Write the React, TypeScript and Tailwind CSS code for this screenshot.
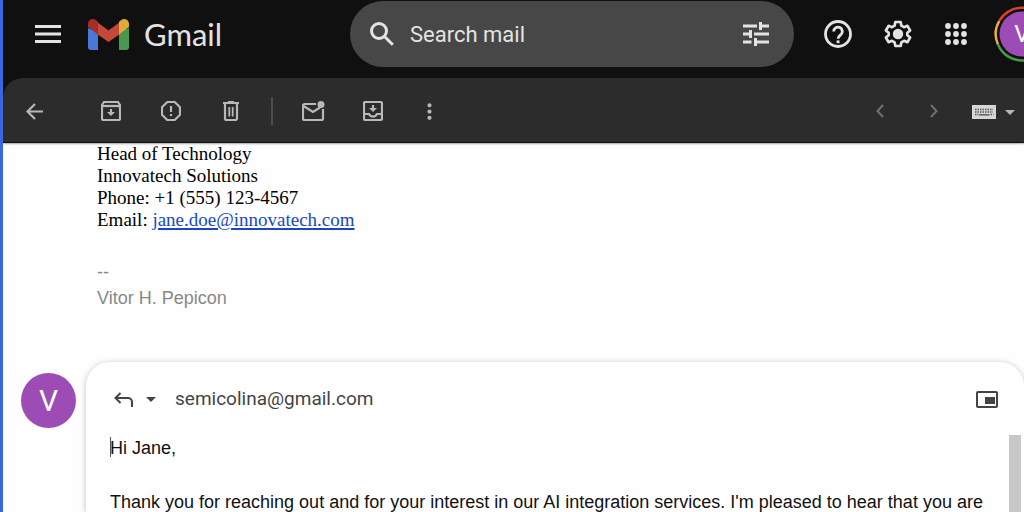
import React from 'react';
import { MdMoreVert } from 'react-icons/md';
import { clsx } from 'clsx';

interface IconButtonProps {
  label: string;
  className?: string;
  children: React.ReactNode;
}

const IconButton: React.FC<IconButtonProps> = ({ label, className, children }) => (
  <button
    type="button"
    aria-label={label}
    className={clsx('flex h-8 w-8 shrink-0 items-center justify-center', className)}
  >
    {children}
  </button>
);

const GmailLogo = () => (
  <svg width="41" height="31" viewBox="0 0 41 31" className="shrink-0">
    <path d="M0 9v19a3 3 0 0 0 3 3h7V13z" fill="#4a78d6" />
    <path d="M31 13v18h7a3 3 0 0 0 3-3V9z" fill="#4a9850" />
    <path d="M9 3 20.500 11.500 32 3V15L20.500 23 9 15z" fill="#c5493a" />
    <path d="M0 5C0 .5 4.500-1.500 8 1.200L10 2.700V15.500L0 8z" fill="#a52f27" />
    <path d="M41 5c0-4.500-4.500-6.500-8-3.800L31 2.700V15.500L41 8z" fill="#ddab3a" />
  </svg>
);

const MenuIcon = () => (
  <svg width="26" height="18" viewBox="0 0 26 18" stroke="currentColor" strokeWidth="3" className="shrink-0">
    <path d="M0 1.500h26M0 9h26M0 16.500h26" />
  </svg>
);

const SearchIcon = () => (
  <svg width="24" height="24" viewBox="0 0 24 24" fill="none" stroke="currentColor" strokeWidth="3" className="shrink-0">
    <circle cx="9" cy="9" r="7.500" />
    <path d="m14.500 14.500 8.300 8.300" />
  </svg>
);

const TuneIcon = () => (
  <svg width="26" height="26" viewBox="0 0 26 26" fill="none" stroke="currentColor" strokeWidth="3" className="shrink-0">
    <path d="M0 5h14M18 5h8M17.500 1v8" />
    <path d="M0 13h8M11 13h15M7.500 9v8" />
    <path d="M0 21h8.500M13 21h13M12.500 17v8" />
  </svg>
);

const HelpIcon = () => (
  <svg width="28" height="28" viewBox="0 0 28 28" fill="none" stroke="currentColor" strokeWidth="2.800">
    <circle cx="14" cy="14" r="12.500" />
    <path d="M9.700 11.500a4.300 4.300 0 1 1 7.400 2.900c-1.500 1.500-3 2-3 4.300" />
    <path d="M12.600 21.800h2.900" />
  </svg>
);

const SettingsIcon = () => (
  <svg width="34" height="34" viewBox="0 0 24 24" fill="none" stroke="currentColor" strokeWidth="2" strokeLinejoin="round">
    <path d="M10 3h4l.5 2.700 2 1.200 2.600-1 2 3.500-2.100 1.700v1.800l2.100 1.700-2 3.500-2.600-1-2 1.200L14 21h-4l-.5-2.700-2-1.200-2.600 1-2-3.500L5 12.900v-1.800L2.900 9.400l2-3.500 2.600 1 2-1.200z" />
    <circle cx="12" cy="12" r="3.900" fill="currentColor" stroke="none" />
  </svg>
);

const AppsIcon = () => (
  <svg width="24" height="24" viewBox="0 0 24 24" fill="currentColor">
    {[4, 12, 20].map((y) =>
      [4, 12, 20].map((x) => <circle key={`${x}-${y}`} cx={x} cy={y} r="2.900" />)
    )}
  </svg>
);

const BackIcon = () => (
  <svg width="17" height="17" viewBox="0 0 17 17" fill="none" stroke="currentColor" strokeWidth="2.200">
    <path d="M9 1 1.500 8.500 9 16M1.500 8.500H17" />
  </svg>
);

const ArchiveIcon = () => (
  <svg width="20" height="20" viewBox="0 0 20 20" fill="none" stroke="currentColor" strokeWidth="2.200">
    <path d="M1 5v12.500A1.500 1.500 0 0 0 2.500 19h15a1.500 1.500 0 0 0 1.500-1.500V4l-2-3H3L1 4z" strokeLinejoin="round" />
    <path d="M1 5h18" />
    <path d="M10 8v5" />
    <path d="M6 11h8l-4 4z" fill="currentColor" stroke="none" />
  </svg>
);

const SpamIcon = () => (
  <svg width="20" height="20" viewBox="0 0 20 20" fill="none" stroke="currentColor" strokeWidth="2.200">
    <path d="M6.300 1h7.400L19 6.300v7.400L13.700 19H6.300L1 13.700V6.300z" strokeLinejoin="round" />
    <path d="M10 5v6M10 13v2" />
  </svg>
);

const TrashIcon = () => (
  <svg width="16" height="20" viewBox="0 0 16 20" fill="none" stroke="currentColor" strokeWidth="2.200">
    <path d="M0 2h16M5 1h6" />
    <path d="M2 2v15.500A1.500 1.500 0 0 0 3.500 19h9a1.500 1.500 0 0 0 1.500-1.500V2" />
    <path d="M6.300 6v9.500M9.700 6v9.500" strokeWidth="1.800" />
  </svg>
);

const UnreadIcon = () => (
  <svg width="23" height="20" viewBox="0 0 23 20" fill="none" stroke="currentColor" strokeWidth="2.200">
    <path d="M14 3H2.500A1.500 1.500 0 0 0 1 4.500v13A1.500 1.500 0 0 0 2.500 19h17a1.500 1.500 0 0 0 1.500-1.500V8" />
    <path d="m1.500 5 9.500 6 7-4.500" />
    <circle cx="19" cy="3.500" r="3.500" fill="currentColor" stroke="none" />
  </svg>
);

const MoveToIcon = () => (
  <svg width="20" height="20" viewBox="0 0 20 20" fill="none" stroke="currentColor" strokeWidth="2.200">
    <rect x="1" y="1" width="18" height="18" rx="1.500" />
    <path d="M1 13h5c1 1.800 2.300 2.600 4 2.600s3-.8 4-2.600h5" />
    <path d="M10 4v4" />
    <path d="M6 7h8l-4 4z" fill="currentColor" stroke="none" />
  </svg>
);

const NewerIcon = () => (
  <svg width="8" height="14" viewBox="0 0 8 14" fill="none" stroke="currentColor" strokeWidth="2">
    <path d="M7 1 1.500 7 7 13" />
  </svg>
);

const OlderIcon = () => (
  <svg width="8" height="14" viewBox="0 0 8 14" fill="none" stroke="currentColor" strokeWidth="2">
    <path d="m1 1 5.500 6L1 13" />
  </svg>
);

const KeyboardIcon = () => (
  <svg width="24" height="14" viewBox="0 0 24 14">
    <rect width="24" height="14" fill="#d6d6d6" />
    <g stroke="#555" strokeWidth="1.400">
      <path d="M3 4.500h18M3 7h18M3 9.500h3M18.500 9.500h3" strokeDasharray="1.500 1" />
      <path d="M6.500 9.800h11" />
    </g>
  </svg>
);

const Caret = () => (
  <svg width="10" height="5" viewBox="0 0 10 5" fill="currentColor" className="shrink-0">
    <path d="M0 0h10L5 5z" />
  </svg>
);

const ReplyIcon = () => (
  <svg width="20" height="16" viewBox="0 0 20 16" fill="none" stroke="currentColor" strokeWidth="2">
    <path d="M6.500 1 1.500 6l5 5" />
    <path d="M1.500 6H14a4 4 0 0 1 4 4v5" />
  </svg>
);

const PopOutIcon = () => (
  <svg width="22" height="17" viewBox="0 0 22 17">
    <rect x="1" y="1" width="20" height="15" rx="1" fill="none" stroke="currentColor" strokeWidth="2" />
    <path d="M9 6h10v7H9z" fill="currentColor" />
  </svg>
);

// Profile picture with the four-colour account ring
const AccountAvatar = () => (
  <svg width="56" height="56" viewBox="0 0 56 56">
    <g fill="none" strokeWidth="2.500">
      <path d="M5.200 15A26 26 0 0 1 50.500 15" stroke="#d8402f" />
      <path d="M4 38.500A26 26 0 0 1 5.200 15" stroke="#e8b035" />
      <path d="M52 38.500A26 26 0 0 1 4 38.500" stroke="#459a4c" />
      <path d="M50.500 15A26 26 0 0 1 52 38.500" stroke="#4a78d6" />
    </g>
    <circle cx="28" cy="28" r="22.500" fill="#9d4cb5" />
    <text x="28" y="36" textAnchor="middle" fill="#fff" fontSize="24" fontFamily="Roboto, sans-serif">V</text>
  </svg>
);

const Header = () => (
  <header className="flex h-[78px] shrink-0 items-start bg-[#101010] text-[#e3e3e3]">
    <div className="flex h-[68px] w-[347px] shrink-0 items-center pl-7">
      <IconButton label="Main menu" className="w-[34px]">
        <MenuIcon />
      </IconButton>
      <a href="#inbox" className="ml-[23px] flex items-center gap-[15px]">
        <GmailLogo />
        <span className="font-[Lato,sans-serif] text-[31px] leading-10">Gmail</span>
      </a>
    </div>
    <form role="search" className="mt-px flex h-[66px] min-w-0 flex-1 items-center rounded-full bg-[#474747] pr-[22px] pl-4">
      <IconButton label="Search">
        <SearchIcon />
      </IconButton>
      <input
        type="text"
        aria-label="Search mail"
        placeholder="Search mail"
        className="ml-3 min-w-0 flex-1 bg-transparent font-[Roboto,sans-serif] text-[22px] outline-none placeholder:text-[#e3e3e3]"
      />
      <IconButton label="Show search options">
        <TuneIcon />
      </IconButton>
    </form>
    <div className="-mr-[26px] flex h-[68px] shrink-0 items-center pl-7">
      <IconButton label="Support">
        <HelpIcon />
      </IconButton>
      <IconButton label="Settings" className="ml-7">
        <SettingsIcon />
      </IconButton>
      <IconButton label="Google apps" className="ml-[26px]">
        <AppsIcon />
      </IconButton>
      <button type="button" aria-label="Google Account" className="ml-[22px] shrink-0">
        <AccountAvatar />
      </button>
    </div>
  </header>
);

const Toolbar = () => (
  <div className="relative flex h-[65px] shrink-0 items-center rounded-tl-[20px] border-b border-[#111] bg-[#2c2c2c] pt-0.5 pr-[9px] pl-[15px] text-[#b8b8b8] shadow-[0_1px_2px_rgba(0,0,0,0.35)]">
    <IconButton label="Back to Inbox">
      <BackIcon />
    </IconButton>
    <div className="ml-[45px] flex items-center gap-7">
      <IconButton label="Archive"><ArchiveIcon /></IconButton>
      <IconButton label="Report spam"><SpamIcon /></IconButton>
      <IconButton label="Delete"><TrashIcon /></IconButton>
    </div>
    <div className="mx-6 h-7 w-0.5 bg-[#4c4c4c]" />
    <div className="flex items-center gap-7">
      <IconButton label="Mark as unread"><UnreadIcon /></IconButton>
      <IconButton label="Move to"><MoveToIcon /></IconButton>
    </div>
    <IconButton label="More" className="ml-6">
      <MdMoreVert size={25} className="shrink-0" />
    </IconButton>
    <div className="ml-auto flex items-center">
      <IconButton label="Newer" className="mr-[22px] text-[#707070]">
        <NewerIcon />
      </IconButton>
      <IconButton label="Older" className="text-[#707070]">
        <OlderIcon />
      </IconButton>
      <button type="button" aria-label="Input tools" className="ml-[22px] flex h-8 items-center gap-[9px] pt-0.5">
        <KeyboardIcon />
        <Caret />
      </button>
    </div>
  </div>
);

const Message = () => (
  <section className="h-[219px] shrink-0 pl-[94px]">
    <div className="font-['Liberation_Serif',serif] text-[19px] leading-[22px] text-black">
      <p>Head of Technology</p>
      <p>Innovatech Solutions</p>
      <p>Phone: +1 (555) 123-4567</p>
      <p>
        Email:{' '}
        <a href="mailto:jane.doe@innovatech.com" className="text-[#1a48c4] underline decoration-2 underline-offset-2">
          jane.doe@innovatech.com
        </a>
      </p>
    </div>
    <div className="mt-7 font-['Liberation_Sans',sans-serif] text-lg leading-[26px] text-[#888]">
      <p>--</p>
      <p>Vitor H. Pepicon</p>
    </div>
  </section>
);

const draft = `Hi Jane,

Thank you for reaching out and for your interest in our AI integration services. I'm pleased to hear that you are`;

const ReplyCard = () => (
  <section className="flex min-h-0 flex-1 items-stretch pl-[18px]">
    <div className="mt-[11px] flex h-[55px] w-[55px] shrink-0 items-center justify-center rounded-full bg-[#9d4cb5] font-[Roboto,sans-serif] text-[30px] text-white">
      V
    </div>
    <div className="ml-2.5 flex min-w-0 flex-1 flex-col rounded-t-3xl bg-white shadow-[0_1px_6px_rgba(0,0,0,0.25)]">
      <div className="flex h-[73px] shrink-0 items-center pt-0.5 pr-[26px] pl-7 text-[#444]">
        <button type="button" aria-label="Type of response" className="flex items-center gap-3">
          <ReplyIcon />
          <Caret />
        </button>
        <span className="ml-[19px] font-[Roboto,sans-serif] text-[19px]">semicolina@gmail.com</span>
        <button type="button" aria-label="Pop out reply" className="ml-auto">
          <PopOutIcon />
        </button>
      </div>
      <div className="relative flex min-h-0 flex-1 pr-[3px]">
        <span className="absolute top-0.5 left-6 h-5 w-px bg-[#555]" />
        <textarea
          aria-label="Message body"
          defaultValue={draft}
          className="min-w-0 flex-1 resize-none overflow-hidden bg-transparent pl-6 font-['Liberation_Sans',sans-serif] text-lg leading-[27px] text-[#111] outline-none"
        />
        <div className="w-3 shrink-0 bg-[#c8c8c8]" />
      </div>
    </div>
  </section>
);

export default function App() {
  return (
    <div className="flex h-screen flex-col overflow-hidden border-l-3 border-[#3a66e0] bg-[#101010]">
      <Header />
      <Toolbar />
      <main className="flex min-h-0 flex-1 flex-col overflow-hidden bg-[#fefefe]">
        <Message />
        <ReplyCard />
      </main>
    </div>
  );
}
